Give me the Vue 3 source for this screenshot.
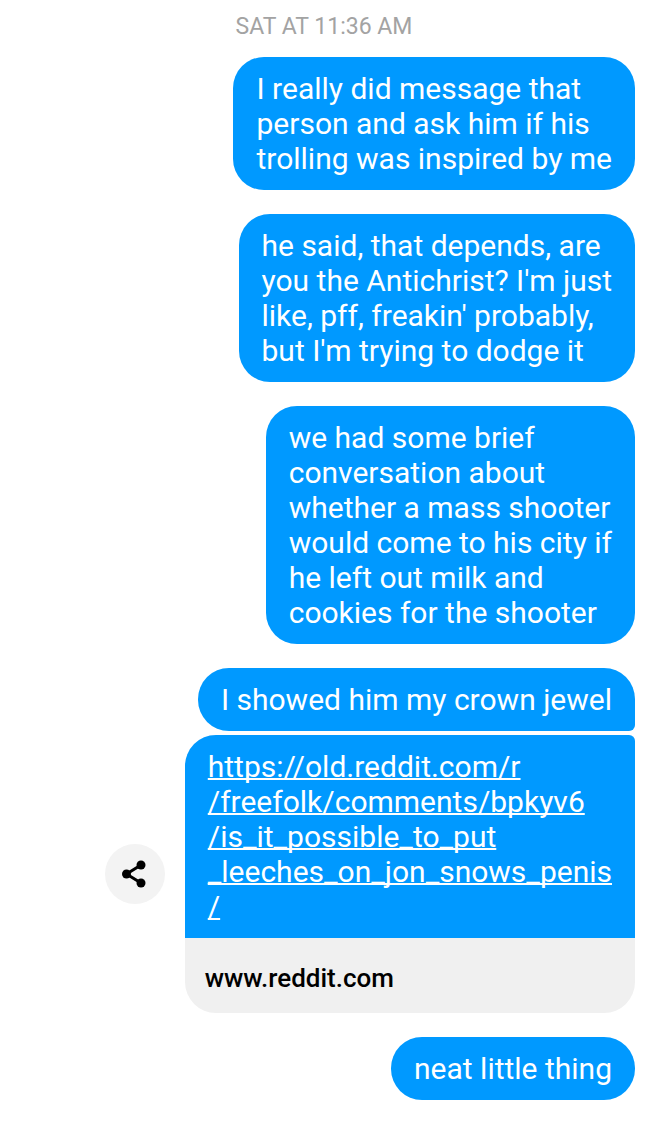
<script setup>
const messages = [
  'I really did message that\nperson and ask him if his\ntrolling was inspired by me',
  "he said, that depends, are\nyou the Antichrist? I'm just\nlike, pff, freakin' probably,\nbut I'm trying to dodge it",
  'we had some brief\nconversation about\nwhether a mass shooter\nwould come to his city if\nhe left out milk and\ncookies for the shooter',
]

const url = 'https://old.reddit.com/r/freefolk/comments/bpkyv6/is_it_possible_to_put_leeches_on_jon_snows_penis/'
const urlLines = [
  'https://old.reddit.com/r',
  '/freefolk/comments/bpkyv6',
  '/is_it_possible_to_put',
  '_leeches_on_jon_snows_penis',
  '/',
]
</script>

<template>
  <main class="chat">
    <time class="stamp">SAT AT 11:36 AM</time>
    <div class="thread">
      <p v-for="text in messages" :key="text" class="bubble">{{ text }}</p>

      <div class="group">
        <p class="bubble joined">I showed him my crown jewel</p>
        <div class="row">
          <button class="share" type="button" aria-label="Share">
            <svg viewBox="0 0 26 28" width="26" height="28" aria-hidden="true">
              <path d="M19 5 4.500 14 19 23" fill="none" stroke="#000" stroke-width="3" />
              <circle cx="19" cy="5" r="4.500" />
              <circle cx="4.500" cy="14" r="4.500" />
              <circle cx="19" cy="23" r="4.500" />
            </svg>
          </button>
          <article class="card">
            <a class="link" :href="url"><template v-for="(line, i) in urlLines" :key="i"><br v-if="i" />{{ line }}</template></a>
            <footer class="domain">www.reddit.com</footer>
          </article>
        </div>
      </div>

      <p class="bubble">neat little thing</p>
    </div>
  </main>
</template>

<style>
body {
  margin: 0;
  background: #fff;
}
</style>

<style scoped>
.chat {
  display: flex;
  flex-direction: column;
  padding: 13px 13px 21px;
  font-family: Roboto, "Liberation Sans", sans-serif;
}

.stamp {
  margin-bottom: 16px;
  color: #a3a3a3;
  font-size: 23px;
  line-height: 28px;
  text-align: center;
}

.thread {
  display: flex;
  flex-direction: column;
  align-items: flex-end;
  gap: 24px;
}

.group {
  display: flex;
  flex-direction: column;
  align-items: flex-end;
  gap: 4px;
}

.bubble {
  margin: 0;
  padding: 14px 23px;
  border-radius: 31px;
  background: #0099ff;
  color: #fff;
  font-size: 30px;
  line-height: 35px;
  white-space: pre-line;
}

.joined {
  border-bottom-right-radius: 6px;
}

.row {
  display: flex;
  align-items: center;
  gap: 20px;
}

.share {
  display: flex;
  align-items: center;
  justify-content: center;
  width: 60px;
  height: 60px;
  padding: 0;
  border: 0;
  border-radius: 50%;
  background: #f3f3f3;
}

.card {
  overflow: hidden;
  border-radius: 31px 6px 31px 31px;
  background: #f0f0f0;
}

.link {
  display: block;
  padding: 14px 23px;
  background: #0099ff;
  color: #fff;
  font-size: 30px;
  line-height: 35px;
  text-decoration: underline;
  text-decoration-thickness: 2px;
  text-decoration-skip-ink: none;
}

.domain {
  padding: 26px 20px 21px;
  color: #000;
  font-size: 26px;
  font-weight: 500;
  line-height: 28px;
}
</style>
